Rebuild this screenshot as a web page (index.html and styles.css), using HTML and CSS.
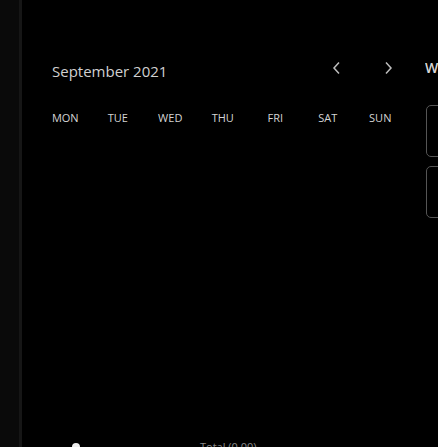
FILE: index.html
```html
<!DOCTYPE html>
<html>
<head>
<meta charset="utf-8">
<link rel="stylesheet" href="styles.css">
</head>
<body>
<div class="app">
  <aside class="rail"></aside>
  <main class="main">
    <section class="calendar">
      <div class="cal-head">
        <h2 class="month">September 2021</h2>
        <div class="nav">
          <span class="chev">
            <svg width="10" height="14" viewBox="0 0 10 14"><path d="M7 1.5 L2 7 L7 12.5" fill="none" stroke="#bdbdbd" stroke-width="1.5"/></svg>
          </span>
          <span class="chev">
            <svg width="10" height="14" viewBox="0 0 10 14"><path d="M3 1.5 L8 7 L3 12.5" fill="none" stroke="#bdbdbd" stroke-width="1.5"/></svg>
          </span>
        </div>
      </div>
      <div class="weekdays">
        <span>MON</span><span>TUE</span><span>WED</span><span>THU</span><span>FRI</span><span>SAT</span><span>SUN</span>
      </div>
      <div class="cal-foot">
        <span class="dot"></span>
        <span class="foot-text">Total (0.00)</span>
      </div>
    </section>
    <section class="side">
      <h3 class="side-title">Week</h3>
      <div class="slot"></div>
      <div class="slot"></div>
    </section>
  </main>
</div>
</body>
</html>
```
FILE: styles.css
```css
html, body {
  margin: 0;
  padding: 0;
  background: #000;
  width: 438px;
  height: 447px;
  overflow: hidden;
}
.app {
  display: flex;
  height: 447px;
  font-family: "Open Sans", "Liberation Sans", sans-serif;
  color: #cfcfcf;
}
.rail {
  width: 19px;
  flex: none;
  background: #0a0a0a;
  border-right: 3px solid #161616;
}
.main {
  display: flex;
  flex: 1;
  min-width: 0;
}
.calendar {
  width: 403px;
  flex: none;
  padding-left: 30px;
  padding-right: 32px;
  display: flex;
  flex-direction: column;
  box-sizing: border-box;
}
.cal-head {
  display: flex;
  align-items: center;
  justify-content: space-between;
  margin-top: 60px;
  height: 20px;
}
.month {
  margin: 0;
  font-size: 15px;
  font-weight: 400;
  color: #d0d0d0;
  position: relative;
  top: 1px;
}
.nav {
  display: flex;
  gap: 41px;
}
.chev {
  display: flex;
  width: 10px;
  height: 14px;
  position: relative;
  top: -2px;
}
.weekdays {
  display: grid;
  grid-template-columns: repeat(7, 52.5px);
  margin-left: -13px;
  margin-top: 30px;
  font-size: 11px;
  color: #d4d4d4;
  text-align: center;
}
.cal-foot {
  margin-top: auto;
  display: flex;
  align-items: flex-start;
  height: 4px;
  gap: 120px;
  padding-left: 20px;
}
.dot {
  width: 8px;
  height: 8px;
  border-radius: 50%;
  background: #eee;
}
.foot-text {
  font-size: 11px;
  color: #888;
  line-height: 8px;
}
.side {
  flex: 1;
  min-width: 0;
  display: flex;
  flex-direction: column;
  overflow: hidden;
}
.side-title {
  margin: 58px 0 0;
  font-size: 14px;
  line-height: 20px;
  font-weight: 600;
  color: #d8d8d8;
  white-space: nowrap;
}
.slot {
  margin: 27px 0 0 1px;
  width: 200px;
  height: 50px;
  border: 1px solid #555;
  border-radius: 5px;
  flex: none;
}
.slot + .slot {
  margin-top: 9px;
}
```
